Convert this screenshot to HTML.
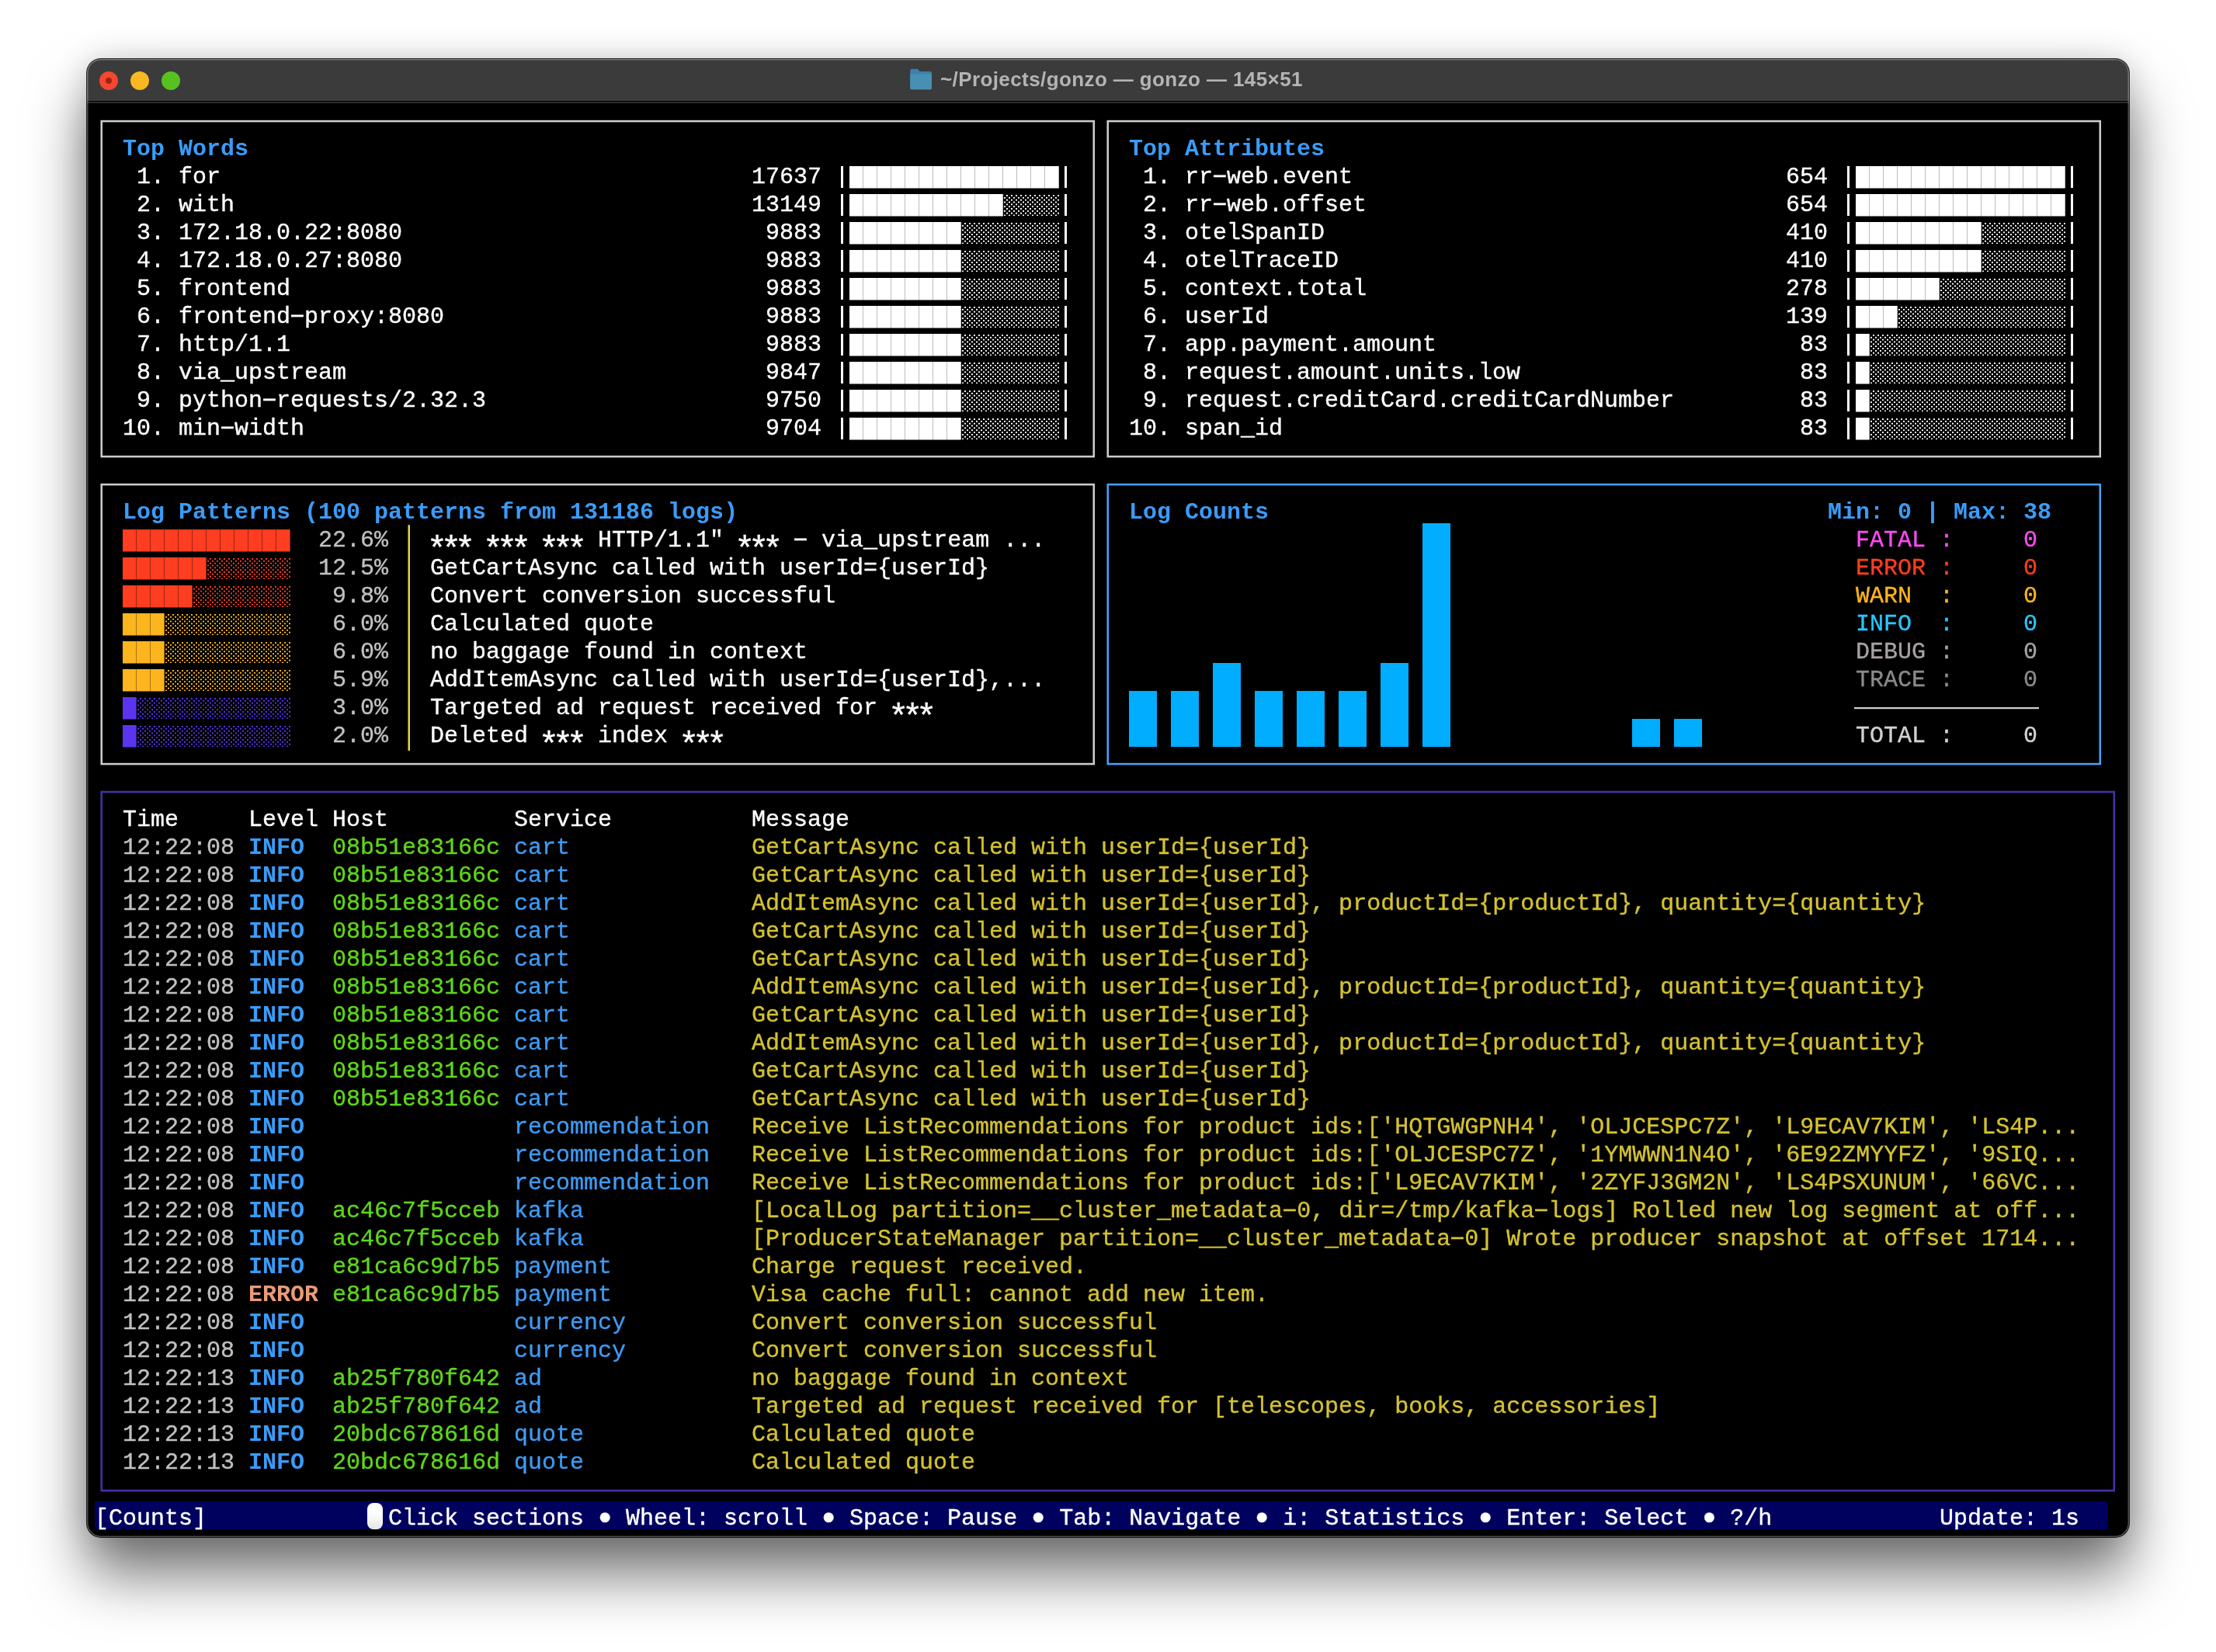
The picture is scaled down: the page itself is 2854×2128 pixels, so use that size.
<!DOCTYPE html>
<html lang="en"><head><meta charset="utf-8"><title>gonzo</title>
<style>
html,body{margin:0;padding:0}
body{width:2854px;height:2128px;position:relative;overflow:hidden;background:#fff;}
.a{position:absolute;box-sizing:content-box}
#scr{position:absolute;left:0;top:0;width:2854px;height:2128px;will-change:transform}
#win{position:absolute;left:112px;top:76px;width:2630px;height:1904px;border-radius:18px;background:#000;
 box-shadow:0 0 0 1px rgba(0,0,0,.82), 0 48px 76px rgba(0,0,0,.55), 0 0 40px rgba(0,0,0,.16);}
#win:after{content:"";position:absolute;left:0;top:0;right:0;bottom:0;border-radius:18px;box-shadow:inset 0 0 0 1.5px rgba(255,255,255,.3);pointer-events:none}
#tb{position:absolute;left:0;top:0;width:100%;height:54px;background:#3b3b3b;border-radius:18px 20px 0 0;}
#tbl{position:absolute;left:0;top:55px;width:100%;height:1.6px;background:#2a2a2a}
.tl{position:absolute;top:92px;width:24px;height:24px;border-radius:50%}
#title{position:absolute;left:1211px;top:85px;height:34px;font:bold 26px/34px "Liberation Sans",sans-serif;color:#b4b4b4;white-space:pre;letter-spacing:0.4px}
.t{position:absolute;white-space:pre;font:30px/36px "Liberation Mono",monospace;height:36px;color:#fff}
.b{font-weight:bold}
i{font-style:normal}
.as{display:inline-block;width:18px;font-size:44px;line-height:0;text-indent:-4.2px;position:relative;top:16.6px}
.bu{display:inline-block;width:18px;font-size:46.5px;line-height:0;text-indent:-4.9px;position:relative;top:6.4px}
.hy{display:inline-block;transform:scaleX(1.85) translateY(-1px)}
.t:not(.b){-webkit-text-stroke:0.35px currentColor}
.w{color:#fff}.g{color:#c2c0c0}
.blue{color:#3a9cf8}
.grn{color:#5fd71a}.svc{color:#3f9bf5}.yel{color:#d4c232}.err{color:#ea9c76}
.mag{color:#f94cf2}.red{color:#ff3d20}.org{color:#fdb51e}.cyan{color:#2bc4ff}.dbg{color:#a9a1a1}.trc{color:#8a8a8a}.tot{color:#d2d2d2}
.fb{background:repeating-linear-gradient(90deg,var(--c) 0,var(--c) 17px,var(--s) 17px,var(--s) 18px)}
.sh{background:
  radial-gradient(circle at 1px 1px,var(--c) 0,var(--c) 1px,transparent 1.3px) 4px 1px/6px 5.7px,
  radial-gradient(circle at 1px 1px,var(--c) 0,var(--c) 1px,transparent 1.3px) 1px 3.85px/6px 5.7px;}
.mouse{width:20px;height:34px;border-radius:8px;background:linear-gradient(#fff,#fdfdfd 40%,#e6e6e6)}
</style></head><body>
<div id="win"><div id="tb"></div><div id="tbl"></div></div>
<div class="tl" style="left:128px;background:#f4472f"><div class="a" style="left:8px;top:8px;width:8px;height:8px;border-radius:50%;background:#9a2414"></div></div>
<div class="tl" style="left:168px;background:#fab822"></div>
<div class="tl" style="left:208px;background:#58c122"></div>
<svg class="a" style="left:1172px;top:88px" width="29" height="28" viewBox="0 0 29 28"><path d="M0.2 3 Q0.2 0.8 2.4 0.8 H9.6 L12.8 4 H26 Q28 4 28 6 V25.2 Q28 27.2 26 27.2 H2.4 Q0.2 27.2 0.2 25.2 Z" fill="#3b7fae"/><path d="M0.2 7.2 H28 V25.2 Q28 27.2 26 27.2 H2.4 Q0.2 27.2 0.2 25.2 Z" fill="#488fb4"/></svg>
<div id="scr">
<div id="title">~/Projects/gonzo — gonzo — 145×51</div>
<svg class="a" style="left:0;top:0" width="2854" height="2128"><rect x="130.75" y="156.1" width="1278" height="432" fill="none" stroke="#cccccc" stroke-width="2.55"/><rect x="1426.75" y="156.1" width="1278" height="432" fill="none" stroke="#cccccc" stroke-width="2.55"/><rect x="130.75" y="624.1" width="1278" height="360" fill="none" stroke="#cccccc" stroke-width="2.55"/><rect x="1426.75" y="624.1" width="1278" height="360" fill="none" stroke="#45a2ff" stroke-width="2.55"/><rect x="130.75" y="1020.1" width="2592" height="900" fill="none" stroke="#4a2ea8" stroke-width="2.55"/><rect x="525.45" y="676.2" width="2.55" height="290.8" fill="#e0d63c"/><rect x="2388" y="911" width="238" height="2.2" fill="#d0d0d0"/></svg>
<span class="t b blue" style="left:158px;top:174px">Top Words</span>
<span class="t w" style="left:158px;top:210px"> 1. for</span>
<span class="t w" style="left:968px;top:210px">17637</span>
<div class="a" style="left:1083px;top:214px;width:3px;height:28px;background:#fff"></div>
<div class="a" style="left:1371px;top:214px;width:3px;height:28px;background:#fff"></div>
<div class="a fb" style="left:1094px;top:214px;width:270px;height:28px;--c:#fff;--s:#bcbcbc"></div>
<div class="a fb" style="left:1094px;top:242px;width:270px;height:1px;opacity:.5;--c:#fff;--s:#bcbcbc"></div>
<span class="t w" style="left:158px;top:246px"> 2. with</span>
<span class="t w" style="left:968px;top:246px">13149</span>
<div class="a" style="left:1083px;top:250px;width:3px;height:28px;background:#fff"></div>
<div class="a" style="left:1371px;top:250px;width:3px;height:28px;background:#fff"></div>
<div class="a fb" style="left:1094px;top:250px;width:198px;height:28px;--c:#fff;--s:#bcbcbc"></div>
<div class="a fb" style="left:1094px;top:278px;width:198px;height:1px;opacity:.5;--c:#fff;--s:#bcbcbc"></div>
<div class="a sh" style="left:1292px;top:250px;width:72px;height:28px;--c:#fff"></div>
<span class="t w" style="left:158px;top:282px"> 3. 172.18.0.22:8080</span>
<span class="t w" style="left:986px;top:282px">9883</span>
<div class="a" style="left:1083px;top:286px;width:3px;height:28px;background:#fff"></div>
<div class="a" style="left:1371px;top:286px;width:3px;height:28px;background:#fff"></div>
<div class="a fb" style="left:1094px;top:286px;width:144px;height:28px;--c:#fff;--s:#bcbcbc"></div>
<div class="a fb" style="left:1094px;top:314px;width:144px;height:1px;opacity:.5;--c:#fff;--s:#bcbcbc"></div>
<div class="a sh" style="left:1238px;top:286px;width:126px;height:28px;--c:#fff"></div>
<span class="t w" style="left:158px;top:318px"> 4. 172.18.0.27:8080</span>
<span class="t w" style="left:986px;top:318px">9883</span>
<div class="a" style="left:1083px;top:322px;width:3px;height:28px;background:#fff"></div>
<div class="a" style="left:1371px;top:322px;width:3px;height:28px;background:#fff"></div>
<div class="a fb" style="left:1094px;top:322px;width:144px;height:28px;--c:#fff;--s:#bcbcbc"></div>
<div class="a fb" style="left:1094px;top:350px;width:144px;height:1px;opacity:.5;--c:#fff;--s:#bcbcbc"></div>
<div class="a sh" style="left:1238px;top:322px;width:126px;height:28px;--c:#fff"></div>
<span class="t w" style="left:158px;top:354px"> 5. frontend</span>
<span class="t w" style="left:986px;top:354px">9883</span>
<div class="a" style="left:1083px;top:358px;width:3px;height:28px;background:#fff"></div>
<div class="a" style="left:1371px;top:358px;width:3px;height:28px;background:#fff"></div>
<div class="a fb" style="left:1094px;top:358px;width:144px;height:28px;--c:#fff;--s:#bcbcbc"></div>
<div class="a fb" style="left:1094px;top:386px;width:144px;height:1px;opacity:.5;--c:#fff;--s:#bcbcbc"></div>
<div class="a sh" style="left:1238px;top:358px;width:126px;height:28px;--c:#fff"></div>
<span class="t w" style="left:158px;top:390px"> 6. frontend<i class="hy">-</i>proxy:8080</span>
<span class="t w" style="left:986px;top:390px">9883</span>
<div class="a" style="left:1083px;top:394px;width:3px;height:28px;background:#fff"></div>
<div class="a" style="left:1371px;top:394px;width:3px;height:28px;background:#fff"></div>
<div class="a fb" style="left:1094px;top:394px;width:144px;height:28px;--c:#fff;--s:#bcbcbc"></div>
<div class="a fb" style="left:1094px;top:422px;width:144px;height:1px;opacity:.5;--c:#fff;--s:#bcbcbc"></div>
<div class="a sh" style="left:1238px;top:394px;width:126px;height:28px;--c:#fff"></div>
<span class="t w" style="left:158px;top:426px"> 7. http/1.1</span>
<span class="t w" style="left:986px;top:426px">9883</span>
<div class="a" style="left:1083px;top:430px;width:3px;height:28px;background:#fff"></div>
<div class="a" style="left:1371px;top:430px;width:3px;height:28px;background:#fff"></div>
<div class="a fb" style="left:1094px;top:430px;width:144px;height:28px;--c:#fff;--s:#bcbcbc"></div>
<div class="a fb" style="left:1094px;top:458px;width:144px;height:1px;opacity:.5;--c:#fff;--s:#bcbcbc"></div>
<div class="a sh" style="left:1238px;top:430px;width:126px;height:28px;--c:#fff"></div>
<span class="t w" style="left:158px;top:462px"> 8. via_upstream</span>
<span class="t w" style="left:986px;top:462px">9847</span>
<div class="a" style="left:1083px;top:466px;width:3px;height:28px;background:#fff"></div>
<div class="a" style="left:1371px;top:466px;width:3px;height:28px;background:#fff"></div>
<div class="a fb" style="left:1094px;top:466px;width:144px;height:28px;--c:#fff;--s:#bcbcbc"></div>
<div class="a fb" style="left:1094px;top:494px;width:144px;height:1px;opacity:.5;--c:#fff;--s:#bcbcbc"></div>
<div class="a sh" style="left:1238px;top:466px;width:126px;height:28px;--c:#fff"></div>
<span class="t w" style="left:158px;top:498px"> 9. python<i class="hy">-</i>requests/2.32.3</span>
<span class="t w" style="left:986px;top:498px">9750</span>
<div class="a" style="left:1083px;top:502px;width:3px;height:28px;background:#fff"></div>
<div class="a" style="left:1371px;top:502px;width:3px;height:28px;background:#fff"></div>
<div class="a fb" style="left:1094px;top:502px;width:144px;height:28px;--c:#fff;--s:#bcbcbc"></div>
<div class="a fb" style="left:1094px;top:530px;width:144px;height:1px;opacity:.5;--c:#fff;--s:#bcbcbc"></div>
<div class="a sh" style="left:1238px;top:502px;width:126px;height:28px;--c:#fff"></div>
<span class="t w" style="left:158px;top:534px">10. min<i class="hy">-</i>width</span>
<span class="t w" style="left:986px;top:534px">9704</span>
<div class="a" style="left:1083px;top:538px;width:3px;height:28px;background:#fff"></div>
<div class="a" style="left:1371px;top:538px;width:3px;height:28px;background:#fff"></div>
<div class="a fb" style="left:1094px;top:538px;width:144px;height:28px;--c:#fff;--s:#bcbcbc"></div>
<div class="a fb" style="left:1094px;top:566px;width:144px;height:1px;opacity:.5;--c:#fff;--s:#bcbcbc"></div>
<div class="a sh" style="left:1238px;top:538px;width:126px;height:28px;--c:#fff"></div>
<span class="t b blue" style="left:1454px;top:174px">Top Attributes</span>
<span class="t w" style="left:1454px;top:210px"> 1. rr<i class="hy">-</i>web.event</span>
<span class="t w" style="left:2300px;top:210px">654</span>
<div class="a" style="left:2379px;top:214px;width:3px;height:28px;background:#fff"></div>
<div class="a" style="left:2667px;top:214px;width:3px;height:28px;background:#fff"></div>
<div class="a fb" style="left:2390px;top:214px;width:270px;height:28px;--c:#fff;--s:#bcbcbc"></div>
<div class="a fb" style="left:2390px;top:242px;width:270px;height:1px;opacity:.5;--c:#fff;--s:#bcbcbc"></div>
<span class="t w" style="left:1454px;top:246px"> 2. rr<i class="hy">-</i>web.offset</span>
<span class="t w" style="left:2300px;top:246px">654</span>
<div class="a" style="left:2379px;top:250px;width:3px;height:28px;background:#fff"></div>
<div class="a" style="left:2667px;top:250px;width:3px;height:28px;background:#fff"></div>
<div class="a fb" style="left:2390px;top:250px;width:270px;height:28px;--c:#fff;--s:#bcbcbc"></div>
<div class="a fb" style="left:2390px;top:278px;width:270px;height:1px;opacity:.5;--c:#fff;--s:#bcbcbc"></div>
<span class="t w" style="left:1454px;top:282px"> 3. otelSpanID</span>
<span class="t w" style="left:2300px;top:282px">410</span>
<div class="a" style="left:2379px;top:286px;width:3px;height:28px;background:#fff"></div>
<div class="a" style="left:2667px;top:286px;width:3px;height:28px;background:#fff"></div>
<div class="a fb" style="left:2390px;top:286px;width:162px;height:28px;--c:#fff;--s:#bcbcbc"></div>
<div class="a fb" style="left:2390px;top:314px;width:162px;height:1px;opacity:.5;--c:#fff;--s:#bcbcbc"></div>
<div class="a sh" style="left:2552px;top:286px;width:108px;height:28px;--c:#fff"></div>
<span class="t w" style="left:1454px;top:318px"> 4. otelTraceID</span>
<span class="t w" style="left:2300px;top:318px">410</span>
<div class="a" style="left:2379px;top:322px;width:3px;height:28px;background:#fff"></div>
<div class="a" style="left:2667px;top:322px;width:3px;height:28px;background:#fff"></div>
<div class="a fb" style="left:2390px;top:322px;width:162px;height:28px;--c:#fff;--s:#bcbcbc"></div>
<div class="a fb" style="left:2390px;top:350px;width:162px;height:1px;opacity:.5;--c:#fff;--s:#bcbcbc"></div>
<div class="a sh" style="left:2552px;top:322px;width:108px;height:28px;--c:#fff"></div>
<span class="t w" style="left:1454px;top:354px"> 5. context.total</span>
<span class="t w" style="left:2300px;top:354px">278</span>
<div class="a" style="left:2379px;top:358px;width:3px;height:28px;background:#fff"></div>
<div class="a" style="left:2667px;top:358px;width:3px;height:28px;background:#fff"></div>
<div class="a fb" style="left:2390px;top:358px;width:108px;height:28px;--c:#fff;--s:#bcbcbc"></div>
<div class="a fb" style="left:2390px;top:386px;width:108px;height:1px;opacity:.5;--c:#fff;--s:#bcbcbc"></div>
<div class="a sh" style="left:2498px;top:358px;width:162px;height:28px;--c:#fff"></div>
<span class="t w" style="left:1454px;top:390px"> 6. userId</span>
<span class="t w" style="left:2300px;top:390px">139</span>
<div class="a" style="left:2379px;top:394px;width:3px;height:28px;background:#fff"></div>
<div class="a" style="left:2667px;top:394px;width:3px;height:28px;background:#fff"></div>
<div class="a fb" style="left:2390px;top:394px;width:54px;height:28px;--c:#fff;--s:#bcbcbc"></div>
<div class="a fb" style="left:2390px;top:422px;width:54px;height:1px;opacity:.5;--c:#fff;--s:#bcbcbc"></div>
<div class="a sh" style="left:2444px;top:394px;width:216px;height:28px;--c:#fff"></div>
<span class="t w" style="left:1454px;top:426px"> 7. app.payment.amount</span>
<span class="t w" style="left:2318px;top:426px">83</span>
<div class="a" style="left:2379px;top:430px;width:3px;height:28px;background:#fff"></div>
<div class="a" style="left:2667px;top:430px;width:3px;height:28px;background:#fff"></div>
<div class="a fb" style="left:2390px;top:430px;width:18px;height:28px;--c:#fff;--s:#bcbcbc"></div>
<div class="a fb" style="left:2390px;top:458px;width:18px;height:1px;opacity:.5;--c:#fff;--s:#bcbcbc"></div>
<div class="a sh" style="left:2408px;top:430px;width:252px;height:28px;--c:#fff"></div>
<span class="t w" style="left:1454px;top:462px"> 8. request.amount.units.low</span>
<span class="t w" style="left:2318px;top:462px">83</span>
<div class="a" style="left:2379px;top:466px;width:3px;height:28px;background:#fff"></div>
<div class="a" style="left:2667px;top:466px;width:3px;height:28px;background:#fff"></div>
<div class="a fb" style="left:2390px;top:466px;width:18px;height:28px;--c:#fff;--s:#bcbcbc"></div>
<div class="a fb" style="left:2390px;top:494px;width:18px;height:1px;opacity:.5;--c:#fff;--s:#bcbcbc"></div>
<div class="a sh" style="left:2408px;top:466px;width:252px;height:28px;--c:#fff"></div>
<span class="t w" style="left:1454px;top:498px"> 9. request.creditCard.creditCardNumber</span>
<span class="t w" style="left:2318px;top:498px">83</span>
<div class="a" style="left:2379px;top:502px;width:3px;height:28px;background:#fff"></div>
<div class="a" style="left:2667px;top:502px;width:3px;height:28px;background:#fff"></div>
<div class="a fb" style="left:2390px;top:502px;width:18px;height:28px;--c:#fff;--s:#bcbcbc"></div>
<div class="a fb" style="left:2390px;top:530px;width:18px;height:1px;opacity:.5;--c:#fff;--s:#bcbcbc"></div>
<div class="a sh" style="left:2408px;top:502px;width:252px;height:28px;--c:#fff"></div>
<span class="t w" style="left:1454px;top:534px">10. span_id</span>
<span class="t w" style="left:2318px;top:534px">83</span>
<div class="a" style="left:2379px;top:538px;width:3px;height:28px;background:#fff"></div>
<div class="a" style="left:2667px;top:538px;width:3px;height:28px;background:#fff"></div>
<div class="a fb" style="left:2390px;top:538px;width:18px;height:28px;--c:#fff;--s:#bcbcbc"></div>
<div class="a fb" style="left:2390px;top:566px;width:18px;height:1px;opacity:.5;--c:#fff;--s:#bcbcbc"></div>
<div class="a sh" style="left:2408px;top:538px;width:252px;height:28px;--c:#fff"></div>
<span class="t b blue" style="left:158px;top:642px">Log Patterns (100 patterns from 131186 logs)</span>
<div class="a fb" style="left:158px;top:682px;width:216px;height:28px;--c:#ff3d20;--s:#a02414"></div>
<div class="a fb" style="left:158px;top:710px;width:216px;height:1px;opacity:.5;--c:#ff3d20;--s:#a02414"></div>
<span class="t g" style="left:410px;top:678px">22.6%</span>
<span class="t w" style="left:554px;top:678px"><i class="as">*</i><i class="as">*</i><i class="as">*</i> <i class="as">*</i><i class="as">*</i><i class="as">*</i> <i class="as">*</i><i class="as">*</i><i class="as">*</i> HTTP/1.1" <i class="as">*</i><i class="as">*</i><i class="as">*</i> <i class="hy">-</i> via_upstream ...</span>
<div class="a fb" style="left:158px;top:718px;width:108px;height:28px;--c:#ff3d20;--s:#a02414"></div>
<div class="a fb" style="left:158px;top:746px;width:108px;height:1px;opacity:.5;--c:#ff3d20;--s:#a02414"></div>
<div class="a sh" style="left:266px;top:718px;width:108px;height:28px;--c:#ff3d20"></div>
<span class="t g" style="left:410px;top:714px">12.5%</span>
<span class="t w" style="left:554px;top:714px">GetCartAsync called with userId={userId}</span>
<div class="a fb" style="left:158px;top:754px;width:90px;height:28px;--c:#ff3d20;--s:#a02414"></div>
<div class="a fb" style="left:158px;top:782px;width:90px;height:1px;opacity:.5;--c:#ff3d20;--s:#a02414"></div>
<div class="a sh" style="left:248px;top:754px;width:126px;height:28px;--c:#ff3d20"></div>
<span class="t g" style="left:428px;top:750px">9.8%</span>
<span class="t w" style="left:554px;top:750px">Convert conversion successful</span>
<div class="a fb" style="left:158px;top:790px;width:54px;height:28px;--c:#fdb51e;--s:#a37714"></div>
<div class="a fb" style="left:158px;top:818px;width:54px;height:1px;opacity:.5;--c:#fdb51e;--s:#a37714"></div>
<div class="a sh" style="left:212px;top:790px;width:162px;height:28px;--c:#fdb51e"></div>
<span class="t g" style="left:428px;top:786px">6.0%</span>
<span class="t w" style="left:554px;top:786px">Calculated quote</span>
<div class="a fb" style="left:158px;top:826px;width:54px;height:28px;--c:#fdb51e;--s:#a37714"></div>
<div class="a fb" style="left:158px;top:854px;width:54px;height:1px;opacity:.5;--c:#fdb51e;--s:#a37714"></div>
<div class="a sh" style="left:212px;top:826px;width:162px;height:28px;--c:#fdb51e"></div>
<span class="t g" style="left:428px;top:822px">6.0%</span>
<span class="t w" style="left:554px;top:822px">no baggage found in context</span>
<div class="a fb" style="left:158px;top:862px;width:54px;height:28px;--c:#fdb51e;--s:#a37714"></div>
<div class="a fb" style="left:158px;top:890px;width:54px;height:1px;opacity:.5;--c:#fdb51e;--s:#a37714"></div>
<div class="a sh" style="left:212px;top:862px;width:162px;height:28px;--c:#fdb51e"></div>
<span class="t g" style="left:428px;top:858px">5.9%</span>
<span class="t w" style="left:554px;top:858px">AddItemAsync called with userId={userId},...</span>
<div class="a fb" style="left:158px;top:898px;width:18px;height:28px;--c:#5b34f0;--s:#3a2199"></div>
<div class="a fb" style="left:158px;top:926px;width:18px;height:1px;opacity:.5;--c:#5b34f0;--s:#3a2199"></div>
<div class="a sh" style="left:176px;top:898px;width:198px;height:28px;--c:#5b34f0"></div>
<span class="t g" style="left:428px;top:894px">3.0%</span>
<span class="t w" style="left:554px;top:894px">Targeted ad request received for <i class="as">*</i><i class="as">*</i><i class="as">*</i></span>
<div class="a fb" style="left:158px;top:934px;width:18px;height:28px;--c:#5b34f0;--s:#3a2199"></div>
<div class="a fb" style="left:158px;top:962px;width:18px;height:1px;opacity:.5;--c:#5b34f0;--s:#3a2199"></div>
<div class="a sh" style="left:176px;top:934px;width:198px;height:28px;--c:#5b34f0"></div>
<span class="t g" style="left:428px;top:930px">2.0%</span>
<span class="t w" style="left:554px;top:930px">Deleted <i class="as">*</i><i class="as">*</i><i class="as">*</i> index <i class="as">*</i><i class="as">*</i><i class="as">*</i></span>
<span class="t b blue" style="left:1454px;top:642px">Log Counts</span>
<span class="t b blue" style="left:2354px;top:642px">Min: 0 | Max: 38</span>
<div class="a" style="left:1454px;top:890px;width:36px;height:72px;background:#00adff"></div>
<div class="a" style="left:1508px;top:890px;width:36px;height:72px;background:#00adff"></div>
<div class="a" style="left:1562px;top:854px;width:36px;height:108px;background:#00adff"></div>
<div class="a" style="left:1616px;top:890px;width:36px;height:72px;background:#00adff"></div>
<div class="a" style="left:1670px;top:890px;width:36px;height:72px;background:#00adff"></div>
<div class="a" style="left:1724px;top:890px;width:36px;height:72px;background:#00adff"></div>
<div class="a" style="left:1778px;top:854px;width:36px;height:108px;background:#00adff"></div>
<div class="a" style="left:1832px;top:674px;width:36px;height:288px;background:#00adff"></div>
<div class="a" style="left:2102px;top:926px;width:36px;height:36px;background:#00adff"></div>
<div class="a" style="left:2156px;top:926px;width:36px;height:36px;background:#00adff"></div>
<span class="t mag" style="left:2390px;top:678px">FATAL :</span>
<span class="t mag" style="left:2606px;top:678px">0</span>
<span class="t red" style="left:2390px;top:714px">ERROR :</span>
<span class="t red" style="left:2606px;top:714px">0</span>
<span class="t org" style="left:2390px;top:750px">WARN  :</span>
<span class="t org" style="left:2606px;top:750px">0</span>
<span class="t cyan" style="left:2390px;top:786px">INFO  :</span>
<span class="t cyan" style="left:2606px;top:786px">0</span>
<span class="t dbg" style="left:2390px;top:822px">DEBUG :</span>
<span class="t dbg" style="left:2606px;top:822px">0</span>
<span class="t trc" style="left:2390px;top:858px">TRACE :</span>
<span class="t trc" style="left:2606px;top:858px">0</span>
<span class="t tot" style="left:2390px;top:930px">TOTAL :</span>
<span class="t tot" style="left:2606px;top:930px">0</span>
<span class="t w" style="left:158px;top:1038px">Time</span>
<span class="t w" style="left:320px;top:1038px">Level</span>
<span class="t w" style="left:428px;top:1038px">Host</span>
<span class="t w" style="left:662px;top:1038px">Service</span>
<span class="t w" style="left:968px;top:1038px">Message</span>
<span class="t g" style="left:158px;top:1074px">12:22:08</span>
<span class="t b blue" style="left:320px;top:1074px">INFO</span>
<span class="t grn" style="left:428px;top:1074px">08b51e83166c</span>
<span class="t svc" style="left:662px;top:1074px">cart</span>
<span class="t yel" style="left:968px;top:1074px">GetCartAsync called with userId={userId}</span>
<span class="t g" style="left:158px;top:1110px">12:22:08</span>
<span class="t b blue" style="left:320px;top:1110px">INFO</span>
<span class="t grn" style="left:428px;top:1110px">08b51e83166c</span>
<span class="t svc" style="left:662px;top:1110px">cart</span>
<span class="t yel" style="left:968px;top:1110px">GetCartAsync called with userId={userId}</span>
<span class="t g" style="left:158px;top:1146px">12:22:08</span>
<span class="t b blue" style="left:320px;top:1146px">INFO</span>
<span class="t grn" style="left:428px;top:1146px">08b51e83166c</span>
<span class="t svc" style="left:662px;top:1146px">cart</span>
<span class="t yel" style="left:968px;top:1146px">AddItemAsync called with userId={userId}, productId={productId}, quantity={quantity}</span>
<span class="t g" style="left:158px;top:1182px">12:22:08</span>
<span class="t b blue" style="left:320px;top:1182px">INFO</span>
<span class="t grn" style="left:428px;top:1182px">08b51e83166c</span>
<span class="t svc" style="left:662px;top:1182px">cart</span>
<span class="t yel" style="left:968px;top:1182px">GetCartAsync called with userId={userId}</span>
<span class="t g" style="left:158px;top:1218px">12:22:08</span>
<span class="t b blue" style="left:320px;top:1218px">INFO</span>
<span class="t grn" style="left:428px;top:1218px">08b51e83166c</span>
<span class="t svc" style="left:662px;top:1218px">cart</span>
<span class="t yel" style="left:968px;top:1218px">GetCartAsync called with userId={userId}</span>
<span class="t g" style="left:158px;top:1254px">12:22:08</span>
<span class="t b blue" style="left:320px;top:1254px">INFO</span>
<span class="t grn" style="left:428px;top:1254px">08b51e83166c</span>
<span class="t svc" style="left:662px;top:1254px">cart</span>
<span class="t yel" style="left:968px;top:1254px">AddItemAsync called with userId={userId}, productId={productId}, quantity={quantity}</span>
<span class="t g" style="left:158px;top:1290px">12:22:08</span>
<span class="t b blue" style="left:320px;top:1290px">INFO</span>
<span class="t grn" style="left:428px;top:1290px">08b51e83166c</span>
<span class="t svc" style="left:662px;top:1290px">cart</span>
<span class="t yel" style="left:968px;top:1290px">GetCartAsync called with userId={userId}</span>
<span class="t g" style="left:158px;top:1326px">12:22:08</span>
<span class="t b blue" style="left:320px;top:1326px">INFO</span>
<span class="t grn" style="left:428px;top:1326px">08b51e83166c</span>
<span class="t svc" style="left:662px;top:1326px">cart</span>
<span class="t yel" style="left:968px;top:1326px">AddItemAsync called with userId={userId}, productId={productId}, quantity={quantity}</span>
<span class="t g" style="left:158px;top:1362px">12:22:08</span>
<span class="t b blue" style="left:320px;top:1362px">INFO</span>
<span class="t grn" style="left:428px;top:1362px">08b51e83166c</span>
<span class="t svc" style="left:662px;top:1362px">cart</span>
<span class="t yel" style="left:968px;top:1362px">GetCartAsync called with userId={userId}</span>
<span class="t g" style="left:158px;top:1398px">12:22:08</span>
<span class="t b blue" style="left:320px;top:1398px">INFO</span>
<span class="t grn" style="left:428px;top:1398px">08b51e83166c</span>
<span class="t svc" style="left:662px;top:1398px">cart</span>
<span class="t yel" style="left:968px;top:1398px">GetCartAsync called with userId={userId}</span>
<span class="t g" style="left:158px;top:1434px">12:22:08</span>
<span class="t b blue" style="left:320px;top:1434px">INFO</span>
<span class="t svc" style="left:662px;top:1434px">recommendation</span>
<span class="t yel" style="left:968px;top:1434px">Receive ListRecommendations for product ids:['HQTGWGPNH4', 'OLJCESPC7Z', 'L9ECAV7KIM', 'LS4P...</span>
<span class="t g" style="left:158px;top:1470px">12:22:08</span>
<span class="t b blue" style="left:320px;top:1470px">INFO</span>
<span class="t svc" style="left:662px;top:1470px">recommendation</span>
<span class="t yel" style="left:968px;top:1470px">Receive ListRecommendations for product ids:['OLJCESPC7Z', '1YMWWN1N4O', '6E92ZMYYFZ', '9SIQ...</span>
<span class="t g" style="left:158px;top:1506px">12:22:08</span>
<span class="t b blue" style="left:320px;top:1506px">INFO</span>
<span class="t svc" style="left:662px;top:1506px">recommendation</span>
<span class="t yel" style="left:968px;top:1506px">Receive ListRecommendations for product ids:['L9ECAV7KIM', '2ZYFJ3GM2N', 'LS4PSXUNUM', '66VC...</span>
<span class="t g" style="left:158px;top:1542px">12:22:08</span>
<span class="t b blue" style="left:320px;top:1542px">INFO</span>
<span class="t grn" style="left:428px;top:1542px">ac46c7f5cceb</span>
<span class="t svc" style="left:662px;top:1542px">kafka</span>
<span class="t yel" style="left:968px;top:1542px">[LocalLog partition=__cluster_metadata<i class="hy">-</i>0, dir=/tmp/kafka<i class="hy">-</i>logs] Rolled new log segment at off...</span>
<span class="t g" style="left:158px;top:1578px">12:22:08</span>
<span class="t b blue" style="left:320px;top:1578px">INFO</span>
<span class="t grn" style="left:428px;top:1578px">ac46c7f5cceb</span>
<span class="t svc" style="left:662px;top:1578px">kafka</span>
<span class="t yel" style="left:968px;top:1578px">[ProducerStateManager partition=__cluster_metadata<i class="hy">-</i>0] Wrote producer snapshot at offset 1714...</span>
<span class="t g" style="left:158px;top:1614px">12:22:08</span>
<span class="t b blue" style="left:320px;top:1614px">INFO</span>
<span class="t grn" style="left:428px;top:1614px">e81ca6c9d7b5</span>
<span class="t svc" style="left:662px;top:1614px">payment</span>
<span class="t yel" style="left:968px;top:1614px">Charge request received.</span>
<span class="t g" style="left:158px;top:1650px">12:22:08</span>
<span class="t b err" style="left:320px;top:1650px">ERROR</span>
<span class="t grn" style="left:428px;top:1650px">e81ca6c9d7b5</span>
<span class="t svc" style="left:662px;top:1650px">payment</span>
<span class="t yel" style="left:968px;top:1650px">Visa cache full: cannot add new item.</span>
<span class="t g" style="left:158px;top:1686px">12:22:08</span>
<span class="t b blue" style="left:320px;top:1686px">INFO</span>
<span class="t svc" style="left:662px;top:1686px">currency</span>
<span class="t yel" style="left:968px;top:1686px">Convert conversion successful</span>
<span class="t g" style="left:158px;top:1722px">12:22:08</span>
<span class="t b blue" style="left:320px;top:1722px">INFO</span>
<span class="t svc" style="left:662px;top:1722px">currency</span>
<span class="t yel" style="left:968px;top:1722px">Convert conversion successful</span>
<span class="t g" style="left:158px;top:1758px">12:22:13</span>
<span class="t b blue" style="left:320px;top:1758px">INFO</span>
<span class="t grn" style="left:428px;top:1758px">ab25f780f642</span>
<span class="t svc" style="left:662px;top:1758px">ad</span>
<span class="t yel" style="left:968px;top:1758px">no baggage found in context</span>
<span class="t g" style="left:158px;top:1794px">12:22:13</span>
<span class="t b blue" style="left:320px;top:1794px">INFO</span>
<span class="t grn" style="left:428px;top:1794px">ab25f780f642</span>
<span class="t svc" style="left:662px;top:1794px">ad</span>
<span class="t yel" style="left:968px;top:1794px">Targeted ad request received for [telescopes, books, accessories]</span>
<span class="t g" style="left:158px;top:1830px">12:22:13</span>
<span class="t b blue" style="left:320px;top:1830px">INFO</span>
<span class="t grn" style="left:428px;top:1830px">20bdc678616d</span>
<span class="t svc" style="left:662px;top:1830px">quote</span>
<span class="t yel" style="left:968px;top:1830px">Calculated quote</span>
<span class="t g" style="left:158px;top:1866px">12:22:13</span>
<span class="t b blue" style="left:320px;top:1866px">INFO</span>
<span class="t grn" style="left:428px;top:1866px">20bdc678616d</span>
<span class="t svc" style="left:662px;top:1866px">quote</span>
<span class="t yel" style="left:968px;top:1866px">Calculated quote</span>
<div class="a" style="left:122px;top:1934px;width:2592px;height:36px;background:#00005f"></div>
<span class="t w" style="left:122px;top:1938px">[Counts]</span>
<span class="t w" style="left:500px;top:1938px">Click sections <i class="bu">•</i> Wheel: scroll <i class="bu">•</i> Space: Pause <i class="bu">•</i> Tab: Navigate <i class="bu">•</i> i: Statistics <i class="bu">•</i> Enter: Select <i class="bu">•</i> ?/h</span>
<span class="t w" style="left:2498px;top:1938px">Update: 1s</span>
<div class="a mouse" style="left:472.6px;top:1936px"></div>
</div>
</body></html>
